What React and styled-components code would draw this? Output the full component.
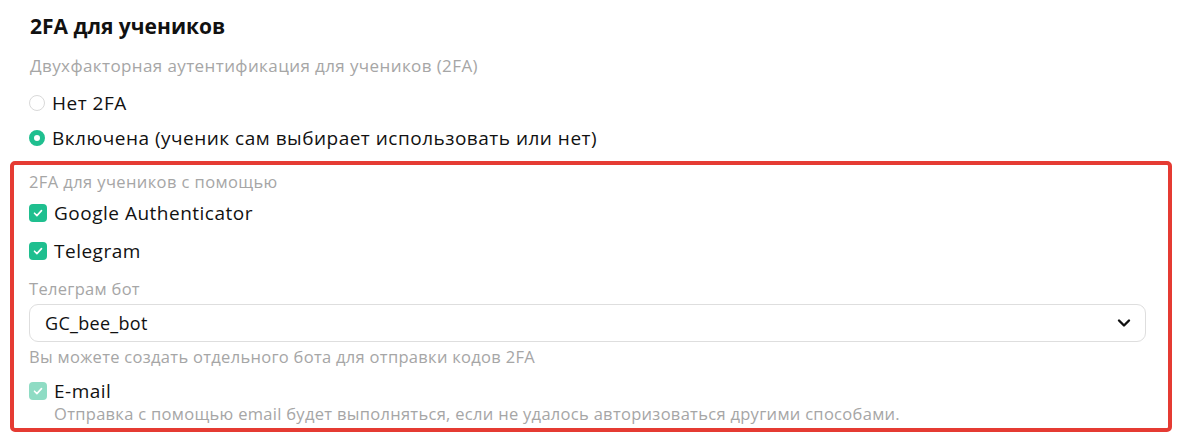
import React from "react";
import styled, { createGlobalStyle } from "styled-components";

const GlobalStyle = createGlobalStyle`
  body {
    margin: 0;
    background: #fff;
    font-family: "Open Sans", "Noto Sans", sans-serif;
    color: #111;
  }
`;

const Page = styled.div`
  width: 1200px;
  height: 440px;
  overflow: hidden;
  box-sizing: border-box;
  padding-top: 12px;
`;

const Intro = styled.div`
  padding-left: 30px;
`;

const Title = styled.h2`
  margin: 0;
  font-size: 21px;
  line-height: 28px;
  font-weight: 700;
`;

const Hint = styled.div`
  margin-top: ${(p) => p.$top || 0}px;
  font-size: ${(p) => p.$size || 16.5}px;
  letter-spacing: ${(p) => p.$ls ?? 0.3}px;
  line-height: 22px;
  color: #a6a6a6;
  padding-left: ${(p) => p.$indent || 0}px;
  white-space: nowrap;
`;

const Row = styled.label`
  display: flex;
  align-items: center;
  gap: 7px;
  height: ${(p) => p.$h || 35}px;
  margin-top: ${(p) => p.$top || 0}px;
  font-size: 19px;
  letter-spacing: 0.5px;
  color: #111;
`;

const Radio = styled.span`
  width: 16px;
  height: 16px;
  box-sizing: border-box;
  border-radius: 50%;
  border: ${(p) => (p.$on ? "5px solid #1fbf8f" : "1px solid #d9d9d9")};
  background: #fff;
  margin-left: -1px;
`;

const Frame = styled.section`
  margin: 6px 0 0 10px;
  width: 1162px;
  box-sizing: border-box;
  border: 4px solid #e53b33;
  border-radius: 5px;
  padding: 6px 22px 0 15px;
  height: 271px;
`;

const Check = styled.span`
  width: 18px;
  height: 18px;
  flex: none;
  border-radius: 4px;
  background: ${(p) => (p.$muted ? "#8fdcc4" : "#1fbf8f")};
  display: flex;
  align-items: center;
  justify-content: center;
`;

const Select = styled.div`
  margin-top: 4px;
  height: 38px;
  box-sizing: border-box;
  border: 1px solid #dedede;
  border-radius: 9px;
  display: flex;
  align-items: center;
  justify-content: space-between;
  padding: 0 14px 0 15px;
  font-size: 18px;
  letter-spacing: 0.3px;
`;

const Tick = () => (
  <svg width="12" height="12" viewBox="0 0 12 12" fill="none">
    <path d="M2.5 6.2l2.4 2.4 4.6-5" stroke="#fff" strokeWidth="1.6" strokeLinecap="round" strokeLinejoin="round" />
  </svg>
);

const Chevron = () => (
  <svg width="14" height="10" viewBox="0 0 14 10" fill="none">
    <path d="M2 2.5l5 5 5-5" stroke="#111" strokeWidth="2.4" strokeLinecap="round" strokeLinejoin="round" />
  </svg>
);

export default function App() {
  return (
    <Page>
      <GlobalStyle />
      <Intro>
        <Title>2FA для учеников</Title>
        <Hint $top={15} $size={17} $ls={0.4}>
          Двухфакторная аутентификация для учеников (2FA)
        </Hint>
        <Row $h={35} $top={8}>
          <Radio />
          Нет 2FA
        </Row>
        <Row $h={35}>
          <Radio $on />
          Включена (ученик сам выбирает использовать или нет)
        </Row>
      </Intro>
      <Frame>
        <Hint $ls={0.4}>2FA для учеников с помощью</Hint>
        <Row $h={38} $top={1}>
          <Check>
            <Tick />
          </Check>
          Google Authenticator
        </Row>
        <Row $h={38}>
          <Check>
            <Tick />
          </Check>
          Telegram
        </Row>
        <Hint $top={8}>Телеграм бот</Hint>
        <Select>
          GC_bee_bot
          <Chevron />
        </Select>
        <Hint $top={4}>Вы можете создать отдельного бота для отправки кодов 2FA</Hint>
        <Row $h={30} $top={8}>
          <Check $muted>
            <Tick />
          </Check>
          E-mail
        </Row>
        <Hint $indent={25} $top={-3}>
          Отправка с помощью email будет выполняться, если не удалось авторизоваться другими способами.
        </Hint>
      </Frame>
    </Page>
  );
}
